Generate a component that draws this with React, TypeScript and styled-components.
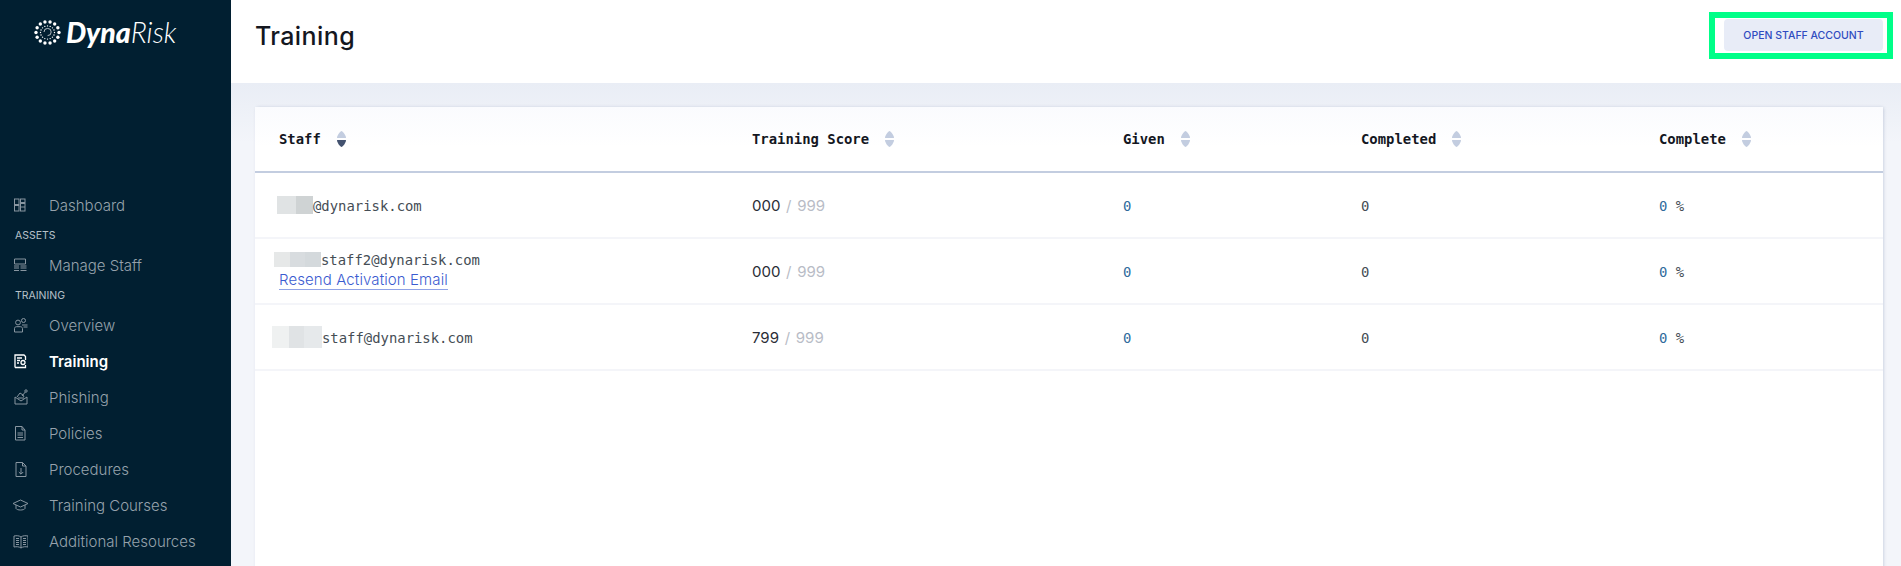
import React from 'react';
import styled, { createGlobalStyle } from 'styled-components';

const SANS = `Inter, "Noto Sans", "Liberation Sans", sans-serif`;
const MONO = `"DejaVu Sans Mono", "Liberation Mono", monospace`;
const COLUMNS = '473px 371px 238px 298px 1fr';

const GlobalStyle = createGlobalStyle`
  html, body {
    margin: 0;
    padding: 0;
    height: 566px;
    overflow: hidden;
    background: #f3f5fa;
    font-family: ${SANS};
  }
`;

const Page = styled.div`
  display: flex;
  height: 566px;
  overflow: hidden;
`;

const Sidebar = styled.aside`
  width: 231px;
  flex-shrink: 0;
  background: #011f31;
`;

const LogoRow = styled.div`
  display: flex;
  align-items: center;
  height: 64px;
  padding-left: 34px;
  gap: 5px;
`;

const LogoText = styled.div`
  font-family: Lato, "Open Sans", sans-serif;
  font-style: italic;
  font-size: 28.5px;
  line-height: 64px;
  color: #fff;
`;

const LogoBold = styled.span`
  font-weight: 900;
`;

const LogoLight = styled.span`
  font-weight: 300;
`;

const Nav = styled.nav`
  padding-top: 123px;
`;

const NavLabel = styled.div`
  height: 24px;
  line-height: 26px;
  padding-left: 15px;
  font-size: 10.5px;
  color: #b7c1c9;
`;

const NavItem = styled.div<{ $active?: boolean }>`
  display: flex;
  align-items: center;
  height: 36px;
  font-size: 15px;
  font-weight: ${(props) => (props.$active ? 600 : 300)};
  color: ${(props) => (props.$active ? '#ffffff' : '#96a2ac')};
`;

const NavIcon = styled.span`
  display: flex;
  justify-content: center;
  width: 49px;
  padding-right: 9px;
  box-sizing: border-box;
`;

const Main = styled.main`
  flex: 1;
  min-width: 0;
  display: flex;
  flex-direction: column;
`;

const Header = styled.header`
  height: 83px;
  flex-shrink: 0;
  display: flex;
  align-items: flex-start;
  justify-content: space-between;
  background: #fff;
  padding: 12px 8px 0 24px;
  box-sizing: border-box;
`;

const Title = styled.h1`
  margin: 0;
  font-size: 25px;
  line-height: 48px;
  font-weight: 500;
  letter-spacing: 0.4px;
  color: #14171f;
`;

const Highlight = styled.div`
  border: 6px solid #00ff88;
  padding: 1px 4px 2px 9px;
`;

const OpenButton = styled.button`
  display: block;
  width: 159px;
  height: 32px;
  padding: 0;
  border: 0;
  border-radius: 4px;
  background: #e8ecf7;
  color: #2f4bc0;
  font-family: ${SANS};
  font-size: 10.5px;
  font-weight: 500;
`;

const Content = styled.div`
  flex: 1;
  padding: 24px 18px 0 24px;
  background: linear-gradient(#e9edf5, #f3f5fa 60px);
`;

const Card = styled.section`
  height: 480px;
  background: #fff;
  border-radius: 3px 3px 0 0;
  box-shadow: 1px 0 3px rgba(120, 135, 170, 0.3);
`;

const HeadRow = styled.div`
  display: grid;
  grid-template-columns: ${COLUMNS};
  height: 66px;
  padding-left: 24px;
  align-items: center;
  box-sizing: border-box;
  border-bottom: 2px solid #c3cde0;
  background: linear-gradient(#fafbfe, #fff 40px);
`;

const HeadCell = styled.div`
  display: flex;
  align-items: center;
  gap: 16px;
  font-family: ${MONO};
  font-size: 13.9px;
  font-weight: 700;
  color: #14171f;
`;

const Row = styled.div`
  display: grid;
  grid-template-columns: ${COLUMNS};
  height: 66px;
  padding-left: 24px;
  align-items: center;
  box-sizing: border-box;
  border-bottom: 2px solid #f4f5f9;
`;

const StaffCell = styled.div<{ $hasLink?: boolean }>`
  padding-bottom: ${(props) => (props.$hasLink ? 2 : 0)}px;
`;

const Mono = styled.div<{ $color?: string }>`
  font-family: ${MONO};
  font-size: 13.9px;
  padding-top: 1px;
  color: ${(props) => props.$color || '#454d55'};
`;

const Blue = styled.span`
  color: #2f6a9c;
`;

const EmailLine = styled.div`
  display: flex;
  align-items: center;
`;

const Redacted = styled.span<{ $width: number; $height: number; $offset: number; $fill: string }>`
  display: inline-block;
  flex-shrink: 0;
  width: ${(props) => props.$width}px;
  height: ${(props) => props.$height}px;
  margin-left: ${(props) => props.$offset}px;
  background: ${(props) => props.$fill};
`;

const ResendLink = styled.a`
  display: inline-block;
  margin-top: 2px;
  font-size: 15px;
  font-weight: 300;
  line-height: 19px;
  letter-spacing: 0.1px;
  color: #3a5bd0;
  border-bottom: 1px solid #8fa2e6;
`;

const Score = styled.div`
  font-size: 15px;
  font-weight: 400;
  word-spacing: 1.5px;
  color: #2a2d36;
`;

const ScoreMax = styled.span`
  color: #b8bcc6;
`;

const SortArrows = ({ active }: { active?: boolean }) => (
  <svg width="9" height="16" viewBox="0 0 9 16">
    <path d="M4.5 0C5.500 0 9 4 9 7H0C0 4 3.500 0 4.500 0Z" fill="#c3cde0" />
    <path d="M4.5 16C3.500 16 0 12 0 9H9C9 12 5.500 16 4.500 16Z" fill={active ? '#43526f' : '#c3cde0'} />
  </svg>
);

const Logo = () => {
  const outer = Array.from({ length: 14 }, (_, i) => (i / 14) * Math.PI * 2);
  const mid = Array.from({ length: 16 }, (_, i) => (i / 16) * Math.PI * 2);
  return (
    <svg width="27" height="25" viewBox="0 0 27 25">
      {outer.map((a) => (
        <circle key={a} cx={13.5 + Math.cos(a) * 11.5} cy={12.5 + Math.sin(a) * 10.8} r="1.7" fill="#fff" />
      ))}
      {mid.map((a) => (
        <circle key={a} cx={13.5 + Math.cos(a) * 7} cy={12.5 + Math.sin(a) * 6.6} r="0.7" fill="#fff" />
      ))}
      <path d="M10 12a3.6 3.6 0 1 1 3.6 3.6" fill="none" stroke="#fff" strokeWidth="0.7" />
    </svg>
  );
};

const Icon = ({ children, active }: { children: React.ReactNode; active?: boolean }) => (
  <svg
    width="16"
    height="16"
    viewBox="0 0 16 16"
    fill="none"
    stroke={active ? '#ffffff' : '#8996a1'}
    strokeWidth={active ? 1.3 : 1}
  >
    {children}
  </svg>
);

const ICONS: Record<string, React.ReactNode> = {
  dashboard: (
    <>
      <rect x="2.500" y="2" width="4.500" height="5.500" />
      <rect x="2.500" y="8.500" width="4.500" height="5.500" />
      <rect x="8.500" y="2" width="4.500" height="3.500" />
      <rect x="8.500" y="6.500" width="4.500" height="7.500" />
      <path d="M8.500 10h4.500" />
    </>
  ),
  staff: (
    <>
      <path d="M2.500 2h11v5h-11z" />
      <path d="M2 9h5M2 11h5M2 13.500h5M8.500 9h6M8.500 11h6M8.500 13.500h6" />
    </>
  ),
  overview: (
    <>
      <circle cx="6" cy="5.500" r="2.400" />
      <path d="M2.500 15v-3.500c0-1.200 1-1.800 2-1.800h4c1.200 0 2 .8 2 1.800V15z" />
      <circle cx="11.500" cy="3.500" r="2" />
      <path d="M10 8h5.500M11.500 10h4" />
    </>
  ),
  training: (
    <>
      <path d="M3 14.500V2h9l1.500 1.500V7" />
      <path d="M5 5h5M5 7.500h3M5 10h2" />
      <circle cx="11" cy="9.500" r="2" />
      <path d="M3 14.500h10.500V12" />
    </>
  ),
  phishing: (
    <>
      <path d="M3 8v7h12V8L9 12z" />
      <path d="M5 8l3-4 3 2 1 2M6 9h6" />
      <circle cx="14" cy="2" r="1.200" />
      <path d="M13.300 3L10 7" />
    </>
  ),
  policies: (
    <>
      <path d="M3.500 1.500h6.500l3 3.500v10H3.500z" />
      <path d="M10 1.500V5h3M5.500 8h5.500M5.500 10h5.500M5.500 12.500h5.500" />
    </>
  ),
  procedures: (
    <>
      <path d="M4 1.500h6.500l3.500 3.500v10.500H4z" />
      <path d="M10.500 1.500V5H14M9 7v6M6.800 11L9 13.200 11.200 11" />
    </>
  ),
  courses: (
    <>
      <path d="M1 6.500L8.500 3l7.500 3.500L8.500 10z" />
      <path d="M4 8v3.500c1 2 8 2 9 0V8" />
    </>
  ),
  resources: (
    <>
      <path d="M9 4C7 2.500 4.500 2.500 2 3v11c2.500-.5 5-.5 7 1 2-1.500 4.500-1.500 7-1V3c-2.500-.5-5-.5-7 1zM9 4v11" />
      <path d="M4 5.500h3M4 7.500h3M4 9.500h3M4 11.500h3M11 5.500h3M11 7.500h3M11 9.500h3M11 11.500h3" />
    </>
  ),
};

const NavEntry = ({ icon, label, active }: { icon: string; label: string; active?: boolean }) => (
  <NavItem $active={active}>
    <NavIcon>
      <Icon active={active}>{ICONS[icon]}</Icon>
    </NavIcon>
    {label}
  </NavItem>
);

const HEADS = ['Staff', 'Training Score', 'Given', 'Completed', 'Complete'];

const STAFF = [
  {
    email: '@dynarisk.com',
    score: '000',
    max: '999',
    redact: {
      $width: 36,
      $height: 18,
      $offset: -2,
      $fill: 'linear-gradient(90deg, #e0e3e4 53%, #cfd3d4 53%)',
    },
  },
  {
    email: 'staff2@dynarisk.com',
    score: '000',
    max: '999',
    link: true,
    redact: {
      $width: 47,
      $height: 15,
      $offset: -5,
      $fill: 'linear-gradient(90deg, #e6e8e8 34%, #d8dcdf 34%, #d8dcdf 66%, #d4d9dc 66%)',
    },
  },
  {
    email: 'staff@dynarisk.com',
    score: '799',
    max: '999',
    redact: {
      $width: 50,
      $height: 22,
      $offset: -7,
      $fill: 'linear-gradient(90deg, #eff1f1 34%, #e0e3e5 34%, #e0e3e5 64%, #e6e9eb 64%)',
    },
  },
];

const App = () => {
  return (
    <Page>
      <GlobalStyle />
      <Sidebar>
        <LogoRow>
          <Logo />
          <LogoText>
            <LogoBold>Dyna</LogoBold>
            <LogoLight>Risk</LogoLight>
          </LogoText>
        </LogoRow>
        <Nav>
          <NavEntry icon="dashboard" label="Dashboard" />
          <NavLabel>ASSETS</NavLabel>
          <NavEntry icon="staff" label="Manage Staff" />
          <NavLabel>TRAINING</NavLabel>
          <NavEntry icon="overview" label="Overview" />
          <NavEntry icon="training" label="Training" active />
          <NavEntry icon="phishing" label="Phishing" />
          <NavEntry icon="policies" label="Policies" />
          <NavEntry icon="procedures" label="Procedures" />
          <NavEntry icon="courses" label="Training Courses" />
          <NavEntry icon="resources" label="Additional Resources" />
        </Nav>
      </Sidebar>
      <Main>
        <Header>
          <Title>Training</Title>
          <Highlight>
            <OpenButton>OPEN STAFF ACCOUNT</OpenButton>
          </Highlight>
        </Header>
        <Content>
          <Card>
            <HeadRow>
              {HEADS.map((head, index) => (
                <HeadCell key={head}>
                  {head}
                  <SortArrows active={index === 0} />
                </HeadCell>
              ))}
            </HeadRow>
            {STAFF.map((person) => (
              <Row key={person.email}>
                <StaffCell $hasLink={person.link}>
                  <EmailLine>
                    <Redacted {...person.redact} />
                    <Mono>{person.email}</Mono>
                  </EmailLine>
                  {person.link && <ResendLink>Resend Activation Email</ResendLink>}
                </StaffCell>
                <Score>
                  {person.score} <ScoreMax>/ {person.max}</ScoreMax>
                </Score>
                <Mono $color="#2f6a9c">0</Mono>
                <Mono>0</Mono>
                <Mono>
                  <Blue>0</Blue> %
                </Mono>
              </Row>
            ))}
          </Card>
        </Content>
      </Main>
    </Page>
  );
};

export default App;
